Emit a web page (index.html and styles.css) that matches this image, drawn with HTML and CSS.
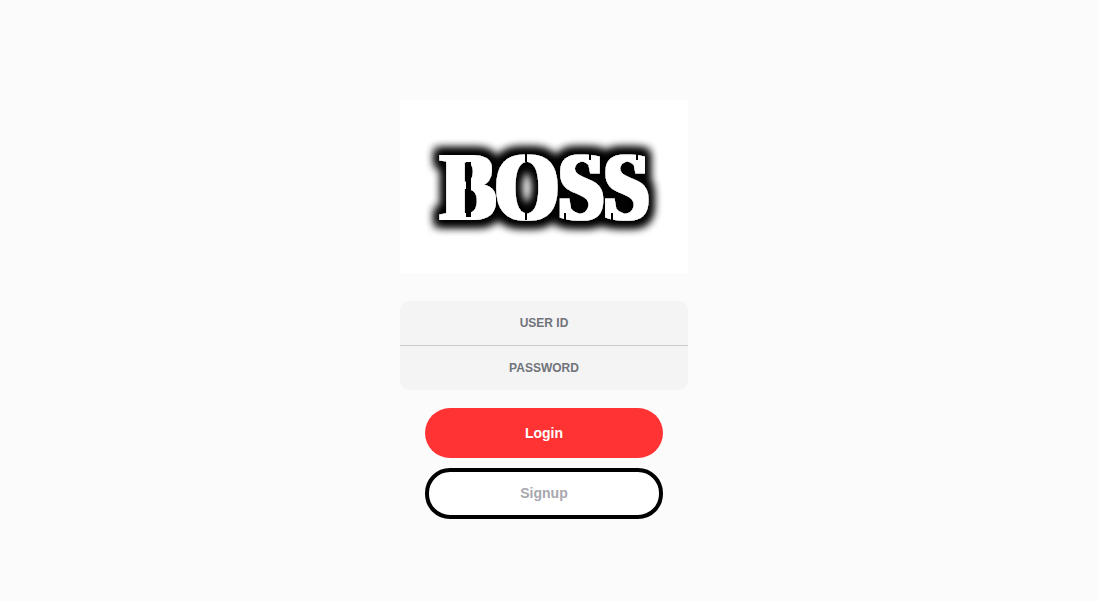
FILE: index.html
```html
<!DOCTYPE html>
<html lang="en">
<head>
    <meta charset="UTF-8">
    <meta name="viewport" content="width=device-width, initial-scale=1.0">
    <title>Login</title>
    <link rel="stylesheet" href="styles.css">
</head>
<body>
    <div class="container">
        <div class="logo">
            <svg class="logo-img" width="288" height="173" viewBox="0 0 288 173">
                <defs>
                    <filter id="halo" filterUnits="userSpaceOnUse" x="0" y="0" width="288" height="173">
                        <feMorphology in="SourceAlpha" operator="dilate" radius="7 7"></feMorphology>
                        <feGaussianBlur stdDeviation="5" result="shadow"></feGaussianBlur>
                        <feMorphology in="SourceGraphic" operator="dilate" radius="3 1.4"></feMorphology>
                        <feGaussianBlur stdDeviation="0.5" result="fat"></feGaussianBlur>
                        <feMerge>
                            <feMergeNode in="shadow"></feMergeNode>
                            <feMergeNode in="shadow"></feMergeNode>
                            <feMergeNode in="fat"></feMergeNode>
                        </feMerge>
                    </filter>
                </defs>
                <text class="logo-text" x="41" y="118.5" textLength="208" lengthAdjust="spacingAndGlyphs" filter="url(#halo)">BOSS</text>
                <!-- stencil cuts -->
                <g class="cuts">
                    <rect x="66" y="62" width="5" height="55"></rect>
                    <rect x="125" y="53" width="2" height="9"></rect>
                    <rect x="125" y="111" width="2" height="9"></rect>
                    <rect x="189" y="53" width="2" height="7"></rect>
                    <rect x="164" y="113" width="2" height="7"></rect>
                    <rect x="236" y="53" width="2" height="7"></rect>
                    <rect x="211" y="113" width="2" height="7"></rect>
                </g>
            </svg>
        </div>

        <form class="login-form">
            <div class="input-group">
                <input type="text" placeholder="USER ID">
                <input type="password" placeholder="PASSWORD">
            </div>
            <button type="button" class="btn btn-login">Login</button>
            <button type="button" class="btn btn-signup">Signup</button>
        </form>
    </div>
</body>
</html>
```

FILE: styles.css
```css
* {
    box-sizing: border-box;
}

body {
    background-color: #fbfbfb;
    font-family: 'Liberation Sans', Arial, sans-serif;
    margin: 0;
    height: 601px;
    overflow: hidden;
}

.container {
    width: 288px;
    margin-left: 400px;
    padding-top: 100px;
}

.logo {
    height: 173px;
    background: #fff;
    margin-bottom: 28px;
}

.logo-img {
    display: block;
}

.logo-text {
    font-family: 'Liberation Serif', serif;
    font-weight: 700;
    font-size: 96px;
    fill: #fff;
}

.cuts {
    fill: #000;
}

.login-form {
    display: flex;
    flex-direction: column;
    align-items: center;
}

.input-group {
    width: 100%;
    background: #f4f4f4;
    border-radius: 10px;
    margin-bottom: 18px;
}

.input-group input {
    display: block;
    width: 100%;
    height: 44.5px;
    background: transparent;
    border: none;
    outline: none;
    text-align: center;
    font-family: inherit;
    font-size: 12px;
    font-weight: 700;
    padding: 0;
}

.input-group input:first-child {
    border-bottom: 1px solid #ccc;
}

.input-group input::placeholder {
    color: #70737a;
    opacity: 1;
}

.btn {
    display: block;
    width: 238px;
    border-radius: 25px;
    font-family: inherit;
    font-size: 14px;
    font-weight: 700;
    padding: 0;
}

.btn-login {
    height: 50px;
    background: #ff3333;
    border: none;
    color: #fff;
    margin-bottom: 10px;
}

.btn-signup {
    height: 51px;
    background: #fff;
    border: 4px solid #000;
    color: #a7a7ae;
    padding-bottom: 1px;
}
```
